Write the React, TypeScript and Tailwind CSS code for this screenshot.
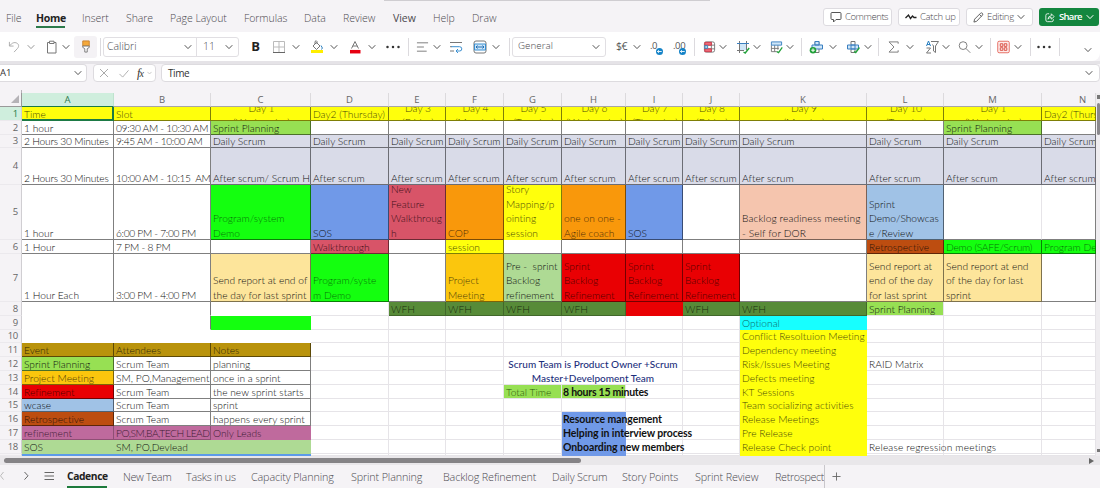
import type { ReactNode } from "react";

type Kids = { children?: ReactNode; className?: string };

const UI = "font-['Open_Sans','Noto_Sans',sans-serif]";

function Chev({ className = "" }: { className?: string }) {
  return (
    <svg viewBox="0 0 8 6" className={`h-[6px] w-2 shrink-0 ${className}`} fill="none" stroke="#555" strokeWidth="1">
      <path d="M.7 1.2 4 4.6 7.3 1.2" />
    </svg>
  );
}

function Div({ className = "" }: { className?: string }) {
  return <div className={`h-[18px] w-px shrink-0 bg-[#dcdade] ${className}`} />;
}

function Ico({ children, className = "" }: Kids) {
  return (
    <svg viewBox="0 0 14 14" className={`h-[14px] w-[14px] shrink-0 ${className}`} fill="none" stroke="#777" strokeWidth="1">
      {children}
    </svg>
  );
}

const menu = [
  { t: "File", c: "w-[30px]" },
  { t: "Home", c: "w-[46px] font-bold tracking-[-0.3px] text-[#222]" },
  { t: "Insert", c: "w-[44px]" },
  { t: "Share", c: "w-[44px]" },
  { t: "Page Layout", c: "w-[74px]" },
  { t: "Formulas", c: "w-[60px]" },
  { t: "Data", c: "w-[39px]" },
  { t: "Review", c: "w-[50px]" },
  { t: "View", c: "w-[40px] font-normal" },
  { t: "Help", c: "w-[39px]" },
  { t: "Draw", c: "w-[30px]" },
];

function MenuBar() {
  return (
    <div className="flex h-8 shrink-0 items-start pl-[6px] text-[10.5px] font-light tracking-[-0.05px] text-[#4c4a50]">
      {menu.map((m) => (
        <div key={m.t} className={`shrink-0 pt-[11px] leading-[14px] whitespace-nowrap ${m.c}`}>
          {m.t}
          {m.t === "Home" && <div className="mt-[1px] h-[2px] w-[29px] bg-[#2c7a4b]" />}
        </div>
      ))}
      <div className="ml-auto flex gap-[6px] pt-2 pr-[1px] text-[9.5px]">
        <div className="flex h-[18px] w-[69px] items-center gap-[3px] rounded-[3px] border border-[#dddbe0] bg-white pl-[6px]">
          <svg viewBox="0 0 12 12" className="h-[12px] w-[12px] shrink-0" fill="none" stroke="#555">
            <path d="M2 1.5h8q1 0 1 1v5q0 1-1 1H6L3.5 11V8.500H2q-1 0-1-1v-5q0-1 1-1z" />
          </svg>
          <span className="tracking-[-0.45px]">Comments</span>
        </div>
        <div className="flex h-[18px] w-[62px] items-center gap-[3px] rounded-[3px] border border-[#dddbe0] bg-white pl-[6px]">
          <svg viewBox="0 0 12 8" className="h-[8px] w-[12px] shrink-0" fill="none" stroke="#222" strokeWidth="1.3">
            <path d="M.5 5 3.500 2l2 3.500L7.500 3l1.500 1.500h2.500" />
          </svg>
          <span className="tracking-[-0.3px] whitespace-nowrap">Catch up</span>
        </div>
        <div className="flex h-[18px] w-[67px] items-center gap-[3px] rounded-[3px] border border-[#dddbe0] bg-white pl-[6px]">
          <svg viewBox="0 0 12 12" className="h-[11px] w-[11px] shrink-0" fill="none" stroke="#555">
            <path d="M1 11l.8-3.200L8.300 1.300q1-.8 1.900.1t.2 1.900L3.900 10.200zM7 2.600l2.300 2.300" />
          </svg>
          <span className="tracking-[-0.3px]">Editing</span>
          <Chev />
        </div>
        <div className="flex h-[18px] w-[60px] items-center gap-[4px] rounded-[3px] bg-[#13863f] pl-[6px] font-semibold text-white">
          <svg viewBox="0 0 12 12" className="h-[11px] w-[10px] shrink-0" fill="none" stroke="#fff">
            <path d="M5 1.500H3q-2 0-2 2v5.500q0 2 2 2h5q2 0 2-2V8M3.500 8q.5-4 4-4V1.500L11 5 7.500 8V6q-2.500 0-4 2z" />
          </svg>
          <span className="tracking-[-0.7px]">Share</span>
          <svg viewBox="0 0 8 6" className="h-[6px] w-2" fill="none" stroke="#fff">
            <path d="M.7 1.200 4 4.600 7.300 1.200" />
          </svg>
        </div>
      </div>
    </div>
  );
}

function Ribbon() {
  return (
    <div className="flex h-[29px] shrink-0 items-center rounded-br-lg bg-white">
      <svg viewBox="0 0 14 14" className="ml-2 h-[14px] w-[13px] shrink-0" fill="none" stroke="#aaa">
        <path d="M1.500 1.500v4.500h4.500M1.800 5.800C4 2.500 7 1.500 9.500 2.800s2.500 4 .5 6L6.500 12.500" />
      </svg>
      <Chev className="ml-[6px] opacity-60" />
      <svg viewBox="0 0 12 14" className="ml-[11px] h-[14px] w-3 shrink-0" fill="none" stroke="#777">
        <path d="M3.500 2.500H1.500v10.500h8.500V2.500H8M3.500 1.200h4.500v2.300H3.500z" />
      </svg>
      <Chev className="ml-1" />
      <div className="ml-1 flex h-[22px] w-[23px] shrink-0 items-center justify-center rounded-[3px] bg-[#f4f2f5]">
        <svg viewBox="0 0 10 14" className="h-[13px] w-[10px]" fill="none">
          <path d="M1.500 1h7v5.500h-7z" fill="#f5a93a" stroke="#c98432" />
          <path d="M1.500 6.500h7v1.500l-2.200 1.300V13H3.700V9.300L1.500 8z" fill="#fff" stroke="#777" />
        </svg>
      </div>
      <Div className="ml-[3px]" />
      <div className="ml-[2px] flex h-5 w-[136px] shrink-0 items-center rounded-[3px] border border-[#e1dfe3] text-[10.5px] font-light text-[#4c4a50]">
        <div className="flex h-full w-[93px] items-center justify-between border-r border-[#e1dfe3] pr-1 pl-[3px]">
          Calibri
          <Chev />
        </div>
        <div className="flex flex-1 items-center justify-between pr-[5px] pl-[6px]">
          11
          <Chev />
        </div>
      </div>
      <span className="ml-3 w-[9px] text-center text-[13px] leading-none font-bold text-[#222]">B</span>
      <Ico className="ml-[12px]">
        <path d="M1.500 1.500h11M1.500 7h11M1.500 1.500v11M7 1.500v11M12.500 1.500v11" stroke="#bbb" />
        <path d="M1 12.500h12" stroke="#666" />
      </Ico>
      <Chev className="ml-[6px]" />
      <Ico className="ml-[10px]">
        <path d="M1 11.500h12" stroke="#ffee00" strokeWidth="3" />
        <path d="M3 6 6.500 2.500 10 6 6.500 9.500zM5 4V1.500q1.500-1.500 2 0V4" />
        <path d="M11 5.500q2.500 3 .5 4" stroke="#2a7fc0" />
      </Ico>
      <Chev className="ml-[6px]" />
      <Ico className="ml-[10px]">
        <path d="M3.500 8.500 7 1.500l3.500 7M4.700 6h4.600" />
        <path d="M2 11.700h10.500" stroke="#e60012" strokeWidth="3.500" />
      </Ico>
      <Chev className="ml-[6px]" />
      <Dots className="ml-[10px]" />
      <Div className="ml-2" />
      <Ico className="ml-[7px] !w-[13px]">
        <path d="M1 2.500h12M1 7h7.500M1 11.500h10.500" />
      </Ico>
      <Chev className="ml-1" />
      <Ico className="ml-2">
        <path d="M1 2.500h12M1 11h4M1 6.700h2" />
        <path d="M2.500 6.700h8q2.300 0 2.300 2.200T10.500 11H7M9 9 7 11l2 2" stroke="#3a8fd0" />
      </Ico>
      <Ico className="ml-[10px]">
        <rect x="1" y="1" width="12" height="12" rx="2" />
        <path d="M1.500 4h11v6h-11z" fill="#cfe6f8" stroke="#3a8fd0" />
        <path d="M3 7h8M4.500 5.500 3 7l1.500 1.500M9.500 5.500 11 7 9.500 8.500" stroke="#1f6fb5" />
      </Ico>
      <Chev className="ml-[5px]" />
      <Div className="ml-[9px]" />
      <div className="ml-[2px] flex h-5 w-[94px] shrink-0 items-center justify-between rounded-[3px] border border-[#e1dfe3] pr-[5px] pl-[5px] text-[9.8px] font-light text-[#4c4a50]">
        General
        <Chev />
      </div>
      <span className="ml-[10px] w-[14px] shrink-0 text-[10.5px] leading-none tracking-[-0.5px] text-[#555]">$€</span>
      <Chev className="ml-[3px]" />
      <Dec text=".0" className="ml-[9px]" />
      <Dec text=".00" className="ml-[9px]" />
      <Div className="ml-[7px]" />
      <Ico className="ml-[8px] !w-[13px]">
        <rect x="1.500" y="1.500" width="11" height="11" rx="2" />
        <path d="M1.500 5h11M1.500 9h11M9 1.500v11" />
        <path d="M2 2h7v3H2zM2 9h7v3H2z" fill="#ee6a78" stroke="#d13a4c" />
        <path d="M2 5.500h3v3H2z" fill="#b9d9f2" stroke="#3a7fb5" />
      </Ico>
      <Chev className="ml-[3px]" />
      <Ico className="ml-[9px]">
        <path d="M4 4h6v6H4z" fill="#cfe6f8" stroke="none" />
        <path d="M3.500 1v12M10.500 1v9M1 10.500h7" />
        <path d="M1 3.500h12" stroke="#3a7fc0" />
        <path d="m7.500 12 1.700 1 4-5" stroke="#22a13a" strokeWidth="1.400" />
      </Ico>
      <Chev className="ml-[3px]" />
      <Ico className="ml-[9px] !w-[13px]">
        <path d="M1.500 5v7h6M5 5v7M8.500 5v5M1.500 8.500h8" />
        <path d="M1.500 1.500h11v3.500h-11z" fill="#cfe6f8" stroke="#3a7fc0" />
        <path d="m7.500 12 1.700 1 4-5.500" stroke="#22a13a" strokeWidth="1.400" />
      </Ico>
      <Chev className="ml-[3px]" />
      <Div className="ml-[7px]" />
      <Ico className="ml-[7px]">
        <path d="M6 1.500h4v11H6z" />
        <path d="M3 5h10.500v4H3zM6 1.500h4V5H6z" fill="#cfe6f8" stroke="#3a7fc0" />
        <circle cx="4" cy="10.200" r="3.300" fill="#22a13a" stroke="none" />
        <path d="M2.200 10.200h3.600M4 8.400V12" stroke="#fff" />
      </Ico>
      <Chev className="ml-[6px]" />
      <Ico className="ml-[9px]">
        <path d="M5 1.500h4v11H5z" />
        <path d="M1.500 5h11v4h-11zM5 5h4v4H5z" fill="#cfe6f8" stroke="#3a7fc0" />
        <path d="m8 11.500 1.700 1 3.800-5" stroke="#22a13a" strokeWidth="1.400" />
      </Ico>
      <Chev className="ml-1" />
      <Div className="ml-[6px]" />
      <Ico className="ml-2 !w-[13px]">
        <path d="M12 3.500v-2H2.200L7.500 7l-5.300 5.500H12v-2" />
      </Ico>
      <Chev className="ml-[6px]" />
      <Ico className="ml-[11px]">
        <path d="M1.500 6 3.500 1l2 5M2 4.500h3" stroke="#2a7fc0" />
        <path d="M1.500 8h4l-4 5h4.500M6 1.500h7.500L10.500 6v6.500L8.500 11V6L7.500 4.500" />
      </Ico>
      <Chev className="ml-[3px]" />
      <Ico className="ml-2 !w-[13px]">
        <circle cx="5.500" cy="5.500" r="4.200" />
        <path d="m8.700 8.700 4.500 4.500" />
      </Ico>
      <Chev className="ml-1" />
      <Div className="ml-[7px]" />
      <Ico className="ml-[6px] !w-[13px]">
        <rect x=".8" y=".8" width="12.400" height="12.400" rx="1.500" fill="#fdeceb" stroke="#e5675c" />
        <path d="M3.500 3.500h2.800v2.800H3.500zM7.800 3.500h2.800v2.800H7.800zM3.500 7.800h2.800v2.800H3.500zM7.800 7.800h2.800v2.800H7.800z" stroke="#d8493e" />
      </Ico>
      <Chev className="ml-1" />
      <Div className="ml-2" />
      <Dots className="ml-[6px]" />
      <Div className="ml-2" />
      <Chev className="mt-[7px] ml-6" />
    </div>
  );
}

function Dots({ className = "" }: { className?: string }) {
  return (
    <svg viewBox="0 0 14 4" className={`h-1 w-[14px] shrink-0 ${className}`} fill="#333">
      <circle cx="1.500" cy="2" r="1.250" />
      <circle cx="7" cy="2" r="1.250" />
      <circle cx="12.500" cy="2" r="1.250" />
    </svg>
  );
}

function Dec({ text, className = "" }: { text: string; className?: string }) {
  return (
    <div className={`relative h-[14px] w-[14px] shrink-0 text-[9.5px] leading-[11px] tracking-[-0.4px] text-[#555] ${className}`}>
      {text}
      <svg viewBox="0 0 8 8" className="absolute right-[1px] bottom-[-1px] h-[7px] w-[7px]">
        <circle cx="4" cy="4" r="4" fill="#1684c8" />
        <path d="M6.500 4h-5M3.300 2.500 1.700 4l1.600 1.500" stroke="#fff" fill="none" />
      </svg>
    </div>
  );
}

function FormulaBar() {
  return (
    <div className="flex h-[29px] shrink-0 items-start border-t-[3px] border-[#e5e3e7] text-[10px] text-[#333]">
      <div className="flex h-[18px] w-[87px] shrink-0 items-center justify-between rounded-r border border-l-0 border-[#dddbdf] bg-white pr-[4px] text-[9.5px]">
        <span>A1</span>
        <Chev />
      </div>
      <div className="ml-[6px] flex h-[18px] w-[63px] shrink-0 items-center rounded border border-[#dddbdf] bg-white pl-[5px]">
        <svg viewBox="0 0 10 10" className="h-[10px] w-[10px]" fill="none" stroke="#aaa">
          <path d="m1 1 8 8M9 1 1 9" />
        </svg>
        <svg viewBox="0 0 12 10" className="ml-[9px] h-[9px] w-[12px]" fill="none" stroke="#aaa">
          <path d="m1 5.500 3.500 3.500L11 1.500" />
        </svg>
        <span className="ml-[7px] w-[10px] font-['Liberation_Serif',serif] text-[12px] leading-none tracking-[-0.8px] italic">
          f<span className="text-[10px]">x</span>
        </span>
        <svg viewBox="0 0 8 6" className="h-[4px] w-[5px]" fill="none" stroke="#aaa">
          <path d="M.7 1.200 4 4.600 7.300 1.200" />
        </svg>
      </div>
      <div className="ml-[5px] flex h-[18px] flex-1 items-center justify-between rounded border border-[#dddbdf] bg-white pr-[6px] pl-[6px]">
        <span className="tracking-[-0.4px]">Time</span>
        <Chev />
      </div>
    </div>
  );
}

const COLS = "grid grid-cols-[22px_92px_97px_100px_78px_57px_58px_58px_64px_57px_57px_127px_77px_98px_54px]";
const ROWS =
  "grid-rows-[14px_14px_13px_37px_55px_14px_48px_14px_14px_13px_14px_14px_14px_14px_13px_14px_14px_14px_2px]";
const LETTERS = "ABCDEFGHIJKLMN".split("");

type Cell = { t?: string; c?: string };

const GREEN = "bg-[#14ff0f]";
const LIME = "bg-[#97e053]";
const RED = "bg-[#e90003] text-[#4e0000]";
const YEL = "bg-[#ffff0c] text-[#4a4a08]";
const CREAM = "bg-[#fde59b]";
const FOREST = "bg-[#578b38] text-[#1a2c10]";
const ROSE = "bg-[#d85468] text-[#401018]";
const ORANGE = "bg-[#f9980b] text-[#503008]";
const BLUE = "bg-[#7099e8]";
const GOLD = "bg-[#fbc60d] text-[#4d3c08]";
const MAUVE = "bg-[#bf6a9d]";
const SAGE = "bg-[#aeda94]";
const ONGREEN = "text-[#077507]";
const SPILL = "relative z-10 overflow-visible text-[10.5px] font-bold tracking-[-0.1px] text-[#111]";
const NUM = "tracking-[-0.22px]";
const TIME = "tracking-[-0.32px]";

const cells: Record<string, Cell> = {
  A1: { t: "Time" },
  B1: { t: "Slot" },
  C1: { t: "Day 1\n(Wednesday)" },
  D1: { t: "Day2 (Thursday)" },
  E1: { t: "Day 3\n(Friday)" },
  F1: { t: "Day 4\n(Monday)" },
  G1: { t: "Day 5\n(Tuesday)" },
  H1: { t: "Day 6\n(Wednesday)" },
  I1: { t: "Day 7\n(Thursday)" },
  J1: { t: "Day 8\n(Friday)" },
  K1: { t: "Day 9\n(Monday)" },
  L1: { t: "Day 10\n(Tuesday)" },
  M1: { t: "Day 1\n(Wednesday)" },
  N1: { t: "Day2 (Thursday)" },
  A2: { t: "1 hour" },
  B2: { t: "09:30 AM - 10:30 AM", c: TIME },
  C2: { t: "Sprint Planning", c: LIME },
  M2: { t: "Sprint Planning", c: LIME },
  A3: { t: "2 Hours 30 Minutes", c: NUM },
  B3: { t: "9:45 AM - 10:00 AM", c: TIME },
  A4: { t: "2 Hours 30 Minutes", c: NUM },
  B4: { t: "10:00 AM - 10:15  AM", c: TIME },
  C4: { t: "After scrum/ Scrum Huddle" },
  A5: { t: "1 hour" },
  B5: { t: "6:00 PM - 7:00 PM", c: TIME },
  C5: { t: "Program/system\nDemo", c: `${GREEN} ${ONGREEN}` },
  D5: { t: "SOS", c: BLUE },
  E5: { t: "New\nFeature\nWalkthroug\nh", c: ROSE },
  F5: { t: "COP", c: ORANGE },
  G5: { t: "Story\nMapping/p\nointing\nsession", c: `${YEL} border-b-transparent` },
  H5: { t: "one on one -\nAgile coach", c: ORANGE },
  I5: { t: "SOS", c: BLUE },
  K5: { t: "Backlog readiness meeting\n- Self for DOR", c: "bg-[#f5c5ae] tracking-[0.1px]" },
  L5: { t: "Sprint\nDemo/Showcas\ne /Review", c: "bg-[#a0c2e6]" },
  A6: { t: "1 Hour" },
  B6: { t: "7 PM - 8 PM", c: NUM },
  D6: { t: "Walkthrough", c: ROSE },
  F6: { t: "session", c: YEL },
  L6: { t: "Retrospective", c: "bg-[#bd4d10] text-[#2c1408]" },
  M6: { t: "Demo (SAFE/Scrum)", c: `${GREEN} ${ONGREEN} tracking-[-0.25px]` },
  N6: { t: "Program Demo", c: `${GREEN} ${ONGREEN}` },
  A7: { t: "1 Hour Each" },
  B7: { t: "3:00 PM - 4:00 PM", c: TIME },
  C7: { t: "Send report at end of\nthe day for last sprint", c: CREAM },
  D7: { t: "Program/syste\nm Demo", c: `${GREEN} ${ONGREEN}` },
  F7: { t: "Project\nMeeting", c: GOLD },
  G7: { t: "Pre -  sprint\nBacklog\nrefinement", c: SAGE },
  H7: { t: "Sprint\nBacklog\nRefinement", c: RED },
  I7: { t: "Sprint\nBacklog\nRefinement", c: RED },
  J7: { t: "Sprint\nBacklog\nRefinement", c: RED },
  L7: { t: "Send report at\nend of the day\nfor last sprint", c: CREAM },
  M7: { t: "Send report at end\nof the day for last\nsprint", c: CREAM },
  E8: { t: "WFH", c: FOREST },
  F8: { t: "WFH", c: FOREST },
  G8: { t: "WFH", c: FOREST },
  H8: { t: "WFH", c: FOREST },
  I8: { c: `${RED} border-transparent` },
  J8: { t: "WFH", c: FOREST },
  K8: { t: "WFH", c: FOREST },
  L8: { t: "Sprint Planning", c: `${LIME} border-[#5d7d43]` },
  C9: { c: GREEN },
  K9: { t: "Optional", c: "bg-[#17ffff] text-[#0c6666]" },
  K10: { t: "Conflict Resoltuion Meeting" },
  K11: { t: "Dependency meeting" },
  K12: { t: "Risk/Issues Meeting" },
  K13: { t: "Defects meeting" },
  K14: { t: "KT Sessions" },
  K15: { t: "Team socializing activities" },
  K16: { t: "Release Meetings" },
  K17: { t: "Pre Release" },
  K18: { t: "Release Check point" },
  L12: { t: "RAID Matrix" },
  L18: { t: "Release regression meetings", c: "relative z-10 overflow-visible tracking-[0.15px]" },
  A11: { t: "Event" },
  B11: { t: "Attendees" },
  C11: { t: "Notes" },
  A12: { t: "Sprint Planning", c: LIME },
  B12: { t: "Scrum Team" },
  C12: { t: "planning" },
  A13: { t: "Project Meeting", c: GOLD },
  B13: { t: "SM, PO,Management" },
  C13: { t: "once in a sprint" },
  A14: { t: "Refinement", c: RED },
  B14: { t: "Scrum Team" },
  C14: { t: "the new sprint starts" },
  A15: { t: "wcase", c: "bg-[#a0c2e6]" },
  B15: { t: "Scrum Team" },
  C15: { t: "sprint" },
  A16: { t: "Retrospective", c: "bg-[#bd4d10] text-[#2c1408]" },
  B16: { t: "Scrum Team" },
  C16: { t: "happens every sprint" },
  A17: { t: "refinement" },
  B17: { t: "PO,SM,BA,TECH LEAD", c: "tracking-[-0.45px]" },
  C17: { t: "Only Leads" },
  A18: { t: "SOS" },
  B18: { t: "SM, PO,Devlead" },
  G14: { t: "Total Time", c: `${LIME} text-[#2d5a0b] border-[#5d8d33]` },
  H14: { t: "8 hours 15 minutes", c: `${LIME} border-[#5d8d33] ${SPILL} tracking-[-0.25px]` },
  H16: { t: "Resource mangement", c: `${BLUE} ${SPILL}` },
  H17: { t: "Helping in interview process", c: `${BLUE} ${SPILL}` },
  H18: { t: "Onboarding new members", c: `${BLUE} ${SPILL}` },
  H19: { c: BLUE },
};

for (const l of LETTERS.slice(2)) {
  cells[`${l}3`] = { t: "Daily Scrum" };
  if (l !== "C") cells[`${l}4`] = { t: "After scrum" };
}

const DARK = "border-[#00000080]";
const FAINT = "border-[#e6e4e8]";

function skin(col: string, row: number): string {
  const abc = "ABC".includes(col);
  if (row === 1) return `${YEL} ${DARK}`;
  if (row === 3 || row === 4) return `${abc && col !== "C" ? "" : "bg-[#d9dbe8]"} ${DARK}`;
  if (row === 5 && col === "M") return "border-r-[#e6e4e8] border-b-[#00000080]";
  if (row <= 7) return DARK;
  if (row === 8 && "EFGHIJK".includes(col)) return "border-[#00000040]";
  if (row <= 10 && abc) return col === "B" && row < 10 ? "border-r-[#777] border-b-transparent" : "border-transparent";
  if (row >= 9 && col === "K") return `${row === 9 ? "" : YEL} border-transparent`;
  if (abc) {
    if (row === 11) return `bg-[#b9930c] text-[#2e2508] ${DARK}`;
    if (row <= 16) return DARK;
    if (row === 17) return `${MAUVE} text-[#401c34] ${col === "C" ? "border-transparent" : "border-[#00000040]"}`;
    if (row === 18) return `${SAGE} border-transparent`;
    return "bg-[#5c9bea] border-transparent";
  }
  if (col === "H" && row >= 16) return "border-transparent";
  return FAINT;
}

function GridCell({ col, row }: { col: string; row: number }) {
  const cell = cells[`${col}${row}`];
  const two = row === 1 && cell?.t?.includes("\n");
  const selected = col === "A" && row === 1;
  const spill = col === "H" && row >= 14;
  return (
    <div
      className={`flex min-w-0 whitespace-pre ${spill ? "pl-px" : "pl-[2px]"} ${selected ? "border-r-2 border-b-2" : "border-r border-b"} ${
        two ? "items-center justify-center pt-[3px] text-center leading-[14.5px]" : "items-end leading-[14.5px]"
      } ${cell?.c?.includes("overflow-visible") ? "" : "overflow-hidden"} ${
        selected ? "border-[#1d7a45] bg-[#ffff0c] text-[#4a4a08]" : skin(col, row)
      } ${cell?.c ?? ""}`}
    >
      {cell?.t && <span className={two ? "shrink-0" : selected ? "-mb-[2px] shrink-0" : "-mb-[1px] shrink-0"}>{cell.t}</span>}
    </div>
  );
}

function Sheet() {
  const rows = Array.from({ length: 19 }, (_, i) => i + 1);
  return (
    <div className="flex h-[363px] shrink-0">
      <div className="w-[1096px] shrink-0 overflow-hidden">
        <div className={`${COLS} h-[14px] text-[9.500px] leading-[13px] text-[#666]`}>
          <div className="flex items-end justify-end border-r border-b border-[#999] pr-[2px] pb-[3px]">
            <svg viewBox="0 0 8 8" className="h-2 w-2" fill="#b5b3b7">
              <path d="M8 0v8H0z" />
            </svg>
          </div>
          {LETTERS.map((l) => (
            <div
              key={l}
              className={`border-r border-b text-center ${
                l === "A" ? "border-r-[#bfe3ce] border-b-[#1d7a45] bg-[#cfeedd] text-[#2f7a50]" : "border-r-[#dcdadd] border-b-[#a8a6a2]"
              } ${l === "N" ? "pl-7" : ""}`}
            >
              {l}
            </div>
          ))}
        </div>
        <div
          className={`${COLS} ${ROWS} bg-white font-['Lato','Liberation_Sans',sans-serif] text-[10.200px] font-light tracking-[0.020px] text-[#111]`}
        >
          {rows.map((r) => [
            <div
              key={`n${r}`}
              className={`flex items-center justify-end overflow-hidden border-r border-b border-r-[#d0ced2] border-b-[#ebe9ed] pt-px pr-[3px] font-['Open_Sans',sans-serif] text-[9.500px] font-normal tracking-[-0.3px] ${
                r === 1 ? "bg-[#cfeedd] text-[#1d7a45]" : "bg-[#f5f3f6] text-[#666]"
              }`}
            >
              {r < 19 ? r : ""}
            </div>,
            ...LETTERS.map((l) => {
              if (l === "G" && r === 12)
                return (
                  <div
                    key="merged"
                    className="col-span-3 row-span-2 flex items-center justify-center border-r border-b border-[#e6e4e8] bg-white pt-px text-center text-[10px] leading-[14px] font-medium whitespace-pre text-[#1c2f7c]"
                  >
                    {"Scrum Team is Product Owner +Scrum\nMaster+Develpoment Team"}
                  </div>
                );
              if ("GHI".includes(l) && (r === 12 || r === 13)) return null;
              return <GridCell key={`${l}${r}`} col={l} row={r} />;
            }),
          ])}
        </div>
      </div>
      <div className="flex w-1 flex-col items-end bg-[#efedf0] pt-[2px]">
        <div className="h-1 w-[3px] bg-[#777]" />
        <div className="mt-[4px] h-8 w-[3px] rounded bg-[#8a888c]" />
        <div className="mt-auto mb-1 h-[3px] w-[3px] bg-[#777]" />
      </div>
    </div>
  );
}

const tabs = [
  { t: "New Team", c: "w-[63px] tracking-[-0.350px]" },
  { t: "Tasks in us", c: "w-[65px] tracking-[-0.250px]" },
  { t: "Capacity Planning", c: "w-[100px] tracking-[-0.150px]" },
  { t: "Sprint Planning", c: "w-[92px] tracking-[-0.150px]" },
  { t: "Backlog Refinement", c: "w-[109px] tracking-[-0.150px]" },
  { t: "Daily Scrum", c: "w-[70px] tracking-[-0.150px]" },
  { t: "Story Points", c: "w-[73px] tracking-[-0.150px]" },
  { t: "Sprint Review", c: "w-[80px] tracking-[-0.150px]" },
  { t: "Retrospective", c: "w-[49px] overflow-hidden tracking-[-0.350px]" },
];

export default function App() {
  return (
    <div className={`flex h-[488px] w-[1100px] flex-col overflow-hidden bg-[#f5f3f6] ${UI}`}>
      <div className="relative flex flex-col">
        <div className="absolute top-0 left-[384px] h-px w-[326px] bg-[#cfcdd1]" />
        <MenuBar />
      </div>
      <Ribbon />
      <FormulaBar />
      <div className="ml-[21px] h-[3px] w-px shrink-0 bg-[#b5b3b7]" />
      <Sheet />
      <div className="flex h-[9px] shrink-0 items-center justify-between bg-[#e9e7ea] pr-[6px] pl-1">
        <div className="h-[5px] w-[577px] rounded-full bg-[#858386]" />
        <svg viewBox="0 0 5 6" className="h-[6px] w-[5px]" fill="#666">
          <path d="M0 0v6l5-3z" />
        </svg>
      </div>
      <div className="flex h-[23px] shrink-0 items-start text-[10.800px] leading-[23px] font-light text-[#4c4a50]">
        <svg viewBox="0 0 60 22" className="h-[22px] w-[60px] shrink-0" fill="none" stroke="#666">
          <path d="M3.500 7 .5 10.800l3 3.800" stroke="#bbb" />
          <path d="m24.500 7 3.500 3.800-3.500 3.800M44.500 7.500h9.500M44.500 11h9.500M44.500 14.500h9.500" />
        </svg>
        <div className="ml-[7px] h-[23px] w-[40px] shrink-0 border-b-2 border-[#1d7a3c] text-[10.300px] font-bold tracking-[-0.4px] text-[#222]">
          Cadence
        </div>
        <div className="ml-4 flex">
          {tabs.map((t) => (
            <div key={t.t} className={`shrink-0 whitespace-nowrap ${t.c}`}>
              {t.t}
            </div>
          ))}
        </div>
        <div className="h-[23px] w-px shrink-0 bg-[#c9c7cb]" />
        <svg viewBox="0 0 10 10" className="mt-[7px] ml-[7px] h-[9px] w-[9px]" fill="none" stroke="#666">
          <path d="M5 .5v9M.5 5h9" />
        </svg>
      </div>
    </div>
  );
}
